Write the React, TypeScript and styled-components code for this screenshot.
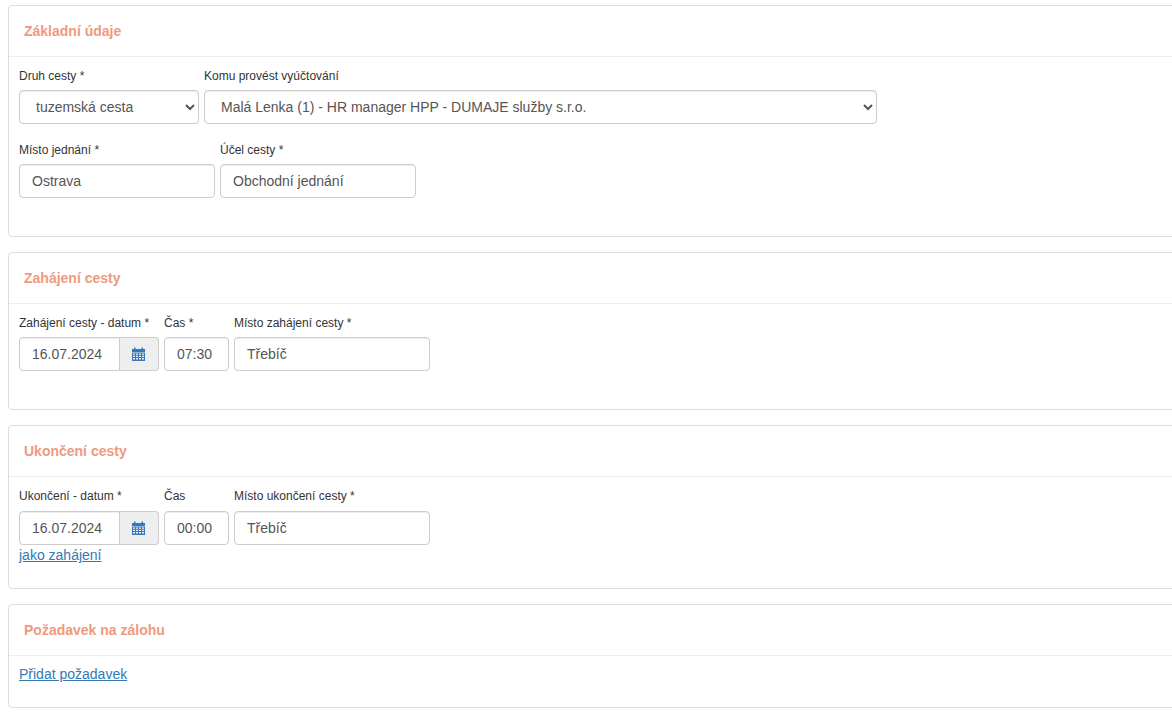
import React from 'react';
import styled, { createGlobalStyle } from 'styled-components';

const GlobalStyle = createGlobalStyle`
  html, body {
    margin: 0;
    padding: 0;
    background: #fff;
    overflow: hidden;
  }
  body {
    font-family: "Liberation Sans", Arial, sans-serif;
    font-size: 14px;
    line-height: 20px;
    color: #333;
  }
`;

const Page = styled.div`
  width: 1172px;
  height: 713px;
  overflow: hidden;
  box-sizing: border-box;
  padding: 5px 0 0 8px;
`;

const Panel = styled.section`
  width: 1200px;
  box-sizing: border-box;
  border: 1px solid #ddd;
  border-radius: 4px;
  margin-bottom: 15px;
  background: #fff;
`;

const PanelHeader = styled.header`
  height: 51px;
  box-sizing: border-box;
  border-bottom: 1px solid #eee;
  padding: 15px 15px 0 15px;
`;

const PanelTitle = styled.h3`
  margin: 0;
  font-size: 14px;
  line-height: 20px;
  font-weight: bold;
  color: #ee9a7e;
`;

const PanelBody = styled.div<{ $height: number; $top?: number }>`
  height: ${(p) => p.$height}px;
  box-sizing: border-box;
  padding: ${(p) => p.$top ?? 11}px 10px 0 10px;
`;

const Row = styled.div`
  display: flex;
  gap: 5px;
  margin-bottom: 18px;
`;

const Field = styled.div<{ $width: number }>`
  width: ${(p) => p.$width}px;
  flex: none;
`;

const Label = styled.label`
  display: block;
  font-size: 12px;
  line-height: 17px;
  margin-bottom: 5px;
  color: #333;
  white-space: nowrap;
`;

const controlStyle = `
  display: block;
  box-sizing: border-box;
  width: 100%;
  height: 34px;
  border: 1px solid #ccc;
  border-radius: 4px;
  background: #fff;
  color: #555;
  font-family: "Liberation Sans", Arial, sans-serif;
  font-size: 14px;
  line-height: 20px;
  box-shadow: inset 0 1px 1px rgba(0, 0, 0, 0.075);
  outline: none;
`;

const TextInput = styled.input`
  ${controlStyle}
  padding: 6px 12px;
`;

const Select = styled.select`
  ${controlStyle}
  padding: 6px 12px;
`;

const DateGroup = styled.div`
  display: flex;
  height: 34px;
`;

const DateInput = styled(TextInput)`
  flex: 1;
  min-width: 0;
  border-radius: 4px 0 0 4px;
`;

const Addon = styled.span`
  width: 39px;
  flex: none;
  box-sizing: border-box;
  display: flex;
  align-items: center;
  justify-content: center;
  padding-right: 1px;
  background: #eee;
  border: 1px solid #ccc;
  border-left: 0;
  border-radius: 0 4px 4px 0;
`;

const ActionLink = styled.a`
  display: block;
  width: max-content;
  color: #337ab7;
  text-decoration: underline;
  font-size: 14px;
  line-height: 20px;
`;

const TightRow = styled(Row)`
  margin-bottom: 0;

  ${Label} {
    margin-bottom: 6px;
  }
`;

const CalendarIcon = () => (
  <svg width="13" height="14" viewBox="0 0 13 14" aria-hidden="true">
    <path fill="#3478bf" d="M0 2h2V0.5h1.5V2h6V0.5H11V2h2v3H0z" />
    <path
      fill="#3478bf"
      fillRule="evenodd"
      d="M0 5.5h13V14H0z M1 6.5v1.3h2v-1.3z M4 6.5v1.3h2v-1.3z M7 6.5v1.3h2v-1.3z M10 6.5v1.3h2v-1.3z M1 8.8v1.3h2v-1.3z M4 8.8v1.3h2v-1.3z M7 8.8v1.3h2v-1.3z M10 8.8v1.3h2v-1.3z M1 11.1v1.3h2v-1.3z M4 11.1v1.3h2v-1.3z M7 11.1v1.3h2v-1.3z M10 11.1v1.3h2v-1.3z"
    />
  </svg>
);

const DateField = ({ label, value }: { label: string; value: string }) => (
  <Field $width={140}>
    <Label>{label}</Label>
    <DateGroup>
      <DateInput value={value} readOnly />
      <Addon>
        <CalendarIcon />
      </Addon>
    </DateGroup>
  </Field>
);

const InputField = ({
  label,
  value,
  width,
}: {
  label: string;
  value: string;
  width: number;
}) => (
  <Field $width={width}>
    <Label>{label}</Label>
    <TextInput value={value} readOnly />
  </Field>
);

const SelectField = ({
  label,
  value,
  width,
}: {
  label: string;
  value: string;
  width: number;
}) => (
  <Field $width={width}>
    <Label>{label}</Label>
    <Select defaultValue={value}>
      <option>{value}</option>
    </Select>
  </Field>
);

const App = () => (
  <Page>
    <GlobalStyle />
    <Panel>
      <PanelHeader>
        <PanelTitle>Základní údaje</PanelTitle>
      </PanelHeader>
      <PanelBody $height={179}>
        <Row>
          <SelectField label="Druh cesty *" value="tuzemská cesta" width={180} />
          <SelectField
            label="Komu provést vyúčtování"
            value="Malá Lenka (1) - HR manager HPP - DUMAJE služby s.r.o."
            width={673}
          />
        </Row>
        <Row>
          <InputField label="Místo jednání *" value="Ostrava" width={196} />
          <InputField label="Účel cesty *" value="Obchodní jednání" width={196} />
        </Row>
      </PanelBody>
    </Panel>

    <Panel>
      <PanelHeader>
        <PanelTitle>Zahájení cesty</PanelTitle>
      </PanelHeader>
      <PanelBody $height={105}>
        <Row>
          <DateField label="Zahájení cesty - datum *" value="16.07.2024" />
          <InputField label="Čas *" value="07:30" width={65} />
          <InputField label="Místo zahájení cesty *" value="Třebíč" width={196} />
        </Row>
      </PanelBody>
    </Panel>

    <Panel>
      <PanelHeader>
        <PanelTitle>Ukončení cesty</PanelTitle>
      </PanelHeader>
      <PanelBody $height={111}>
        <TightRow>
          <DateField label="Ukončení - datum *" value="16.07.2024" />
          <InputField label="Čas" value="00:00" width={65} />
          <InputField label="Místo ukončení cesty *" value="Třebíč" width={196} />
        </TightRow>
        <ActionLink href="#">jako zahájení</ActionLink>
      </PanelBody>
    </Panel>

    <Panel>
      <PanelHeader>
        <PanelTitle>Požadavek na zálohu</PanelTitle>
      </PanelHeader>
      <PanelBody $height={51} $top={8}>
        <ActionLink href="#">Přidat požadavek</ActionLink>
      </PanelBody>
    </Panel>
  </Page>
);

export default App;
